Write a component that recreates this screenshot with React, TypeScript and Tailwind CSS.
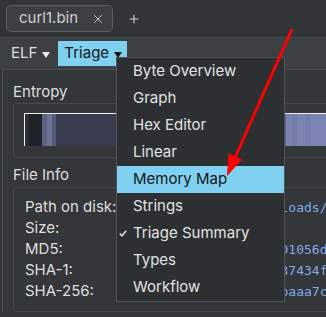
import { X, Plus } from 'lucide-react'

const menuItems = [
  'Byte Overview',
  'Graph',
  'Hex Editor',
  'Linear',
  'Memory Map',
  'Strings',
  'Triage Summary',
  'Types',
  'Workflow',
]

const fileInfo = [
  { label: 'Path on disk:', value: '/Users/username/Downloads/curl1.bin' },
  { label: 'Size:', value: '0x2f1a8' },
  { label: 'MD5:', value: '8c1e49a0f3b7d6e5a4c201056d4be7f9' },
  { label: 'SHA-1:', value: 'e4a90c7b21d5f86ab0ce37434f2e9d18a6b5c0f7' },
  { label: 'SHA-256:', value: '4d2c8e91a7f03b6e5d16baaa7c9e2f48b10d35a6e7c92f1b84d0a3e5c6f7b190' },
]

// entropy strip, left to right
const entropy = [
  { w: 4, c: 'bg-[#2b2f38]' },
  { w: 13, c: 'bg-[#1f2228]' },
  { w: 5, c: 'bg-[#5b6282]' },
  { w: 5, c: 'bg-[#6c7396]' },
  { w: 4, c: 'bg-[#555b7a]' },
  { w: 120, c: 'bg-[#3a3d50]' },
  { w: 110, c: 'bg-[#5e658e]' },
  { w: 6, c: 'bg-[#7a82b1]' },
  { w: 5, c: 'bg-[#737ba9]' },
  { w: 8, c: 'bg-[#7c84b3]' },
  { w: 6, c: 'bg-[#767ead]' },
  { w: 120, c: 'bg-[#7c84b4]' },
]

function Caret({ dark }: { dark?: boolean }) {
  return (
    <svg width="8" height="6" viewBox="0 0 8 6" className="ml-[5px] mt-[2px]">
      <path d="M0 0 L8 0 L4 6 Z" fill={dark ? '#111' : '#e8e8e8'} />
    </svg>
  )
}

export default function App() {
  return (
    <div className="relative w-[326px] h-[317px] overflow-hidden bg-[#343739] font-['Inter',sans-serif] text-[15px] text-[#dedede]">
      {/* Tab bar */}
      <div className="h-[38px] bg-[#323538] border-b border-[#45494c] flex items-center px-[6px]">
        <div className="w-[107px] h-[27px] rounded-[5px] border border-[#5a5e61] bg-[#3d4043] flex items-center pl-[12px] pr-[7px] text-[#cfcfcf]">
          <span className="flex-1">curl1.bin</span>
          <X className="w-[14px] h-[14px] text-[#d0d0d0]" strokeWidth={1.6} />
        </div>
        <Plus className="ml-[14px] w-[14px] h-[14px] text-[#d6d6d6]" strokeWidth={1.8} />
      </div>

      {/* View selector */}
      <div className="h-[31px] bg-[#3d4043] flex items-center pl-[11px]">
        <div className="flex items-center">
          <span>ELF</span>
          <Caret />
        </div>
        <div className="ml-[8px] h-[25px] w-[69px] bg-[#7fd0f1] text-[#141414] flex items-center pl-[6px]">
          <span>Triage</span>
          <Caret dark />
        </div>
      </div>

      {/* Triage content */}
      <div className="w-[420px] ml-[2px] border-l border-t border-[#4a4e51] pt-[12px] pl-[10px]">
        <div className="h-[20px] leading-[20px]">Entropy</div>
        <div className="mt-[1px] h-[55px] rounded-[3px] border border-[#45494c] pt-[9px] pl-[10px]">
          <div className="flex h-[33px] border-l border-t border-[#f2f2f2]">
            {entropy.map((s, i) => (
              <div key={i} className={`h-full shrink-0 ${s.c}`} style={{ width: s.w }} />
            ))}
          </div>
        </div>

        <div className="mt-[7px] h-[20px] leading-[20px]">File Info</div>
        <div className="mt-[2px] rounded-[3px] border border-[#45494c] pt-[9px] pb-[9px] pl-[11px]">
          {fileInfo.map((row) => (
            <div key={row.label} className="h-[21px] flex items-center">
              <span className="w-[99px] shrink-0">{row.label}</span>
              <span className="font-['DejaVu_Sans_Mono',monospace] text-[13px] text-[#82a8e8] whitespace-nowrap">
                {row.value}
              </span>
            </div>
          ))}
        </div>
      </div>

      {/* Dropdown menu */}
      <div className="absolute left-[116px] top-[57px] w-[169px] bg-[#2d3032] border border-[#505457] text-[#e2e2e2]">
        {menuItems.map((item) => (
          <div
            key={item}
            className={`h-[27px] flex items-center pl-[16px] relative ${
              item === 'Memory Map' ? 'bg-[#7fd0f1] text-[#141414]' : ''
            }`}
          >
            {item === 'Triage Summary' && (
              <svg width="8" height="7" viewBox="0 0 8 7" className="absolute left-[2px] top-[10px]">
                <path d="M0.8 3.6 L3 5.8 L7.2 0.8" stroke="#d8d8d8" strokeWidth="1.6" fill="none" />
              </svg>
            )}
            {item}
          </div>
        ))}
      </div>

      {/* Red annotation arrow */}
      <svg className="absolute left-0 top-0" width="326" height="317" viewBox="0 0 326 317">
        <line x1="292" y1="29" x2="234" y2="160" stroke="#ff0000" strokeWidth="3" />
        <path d="M227 176 L228.5 153.5 L242 159.5 Z" fill="#ff0000" />
      </svg>
    </div>
  )
}
